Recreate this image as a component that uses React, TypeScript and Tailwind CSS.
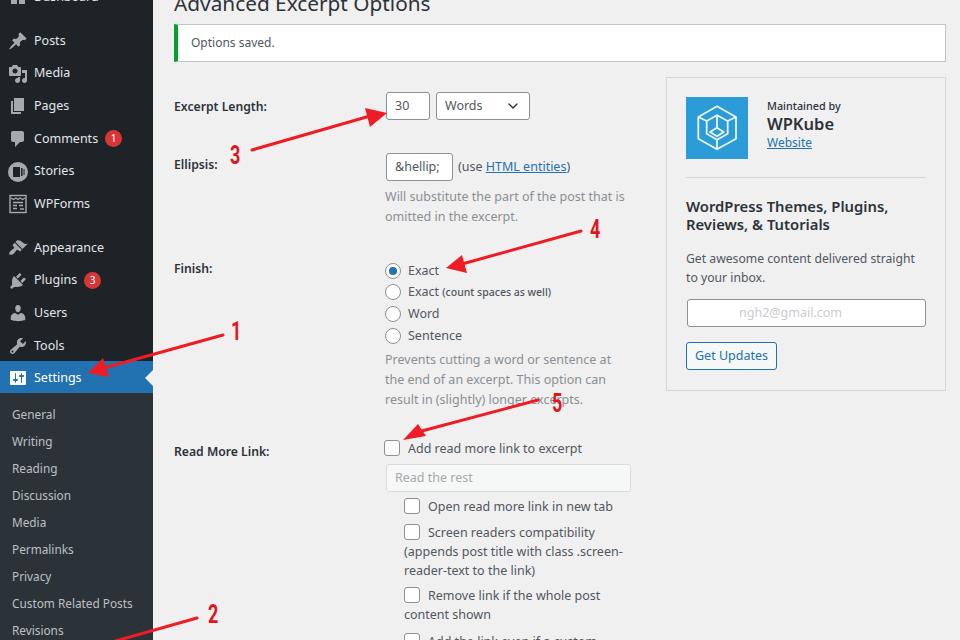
import React from "react";
import { ChevronDown } from "lucide-react";

const FONT = "font-['Noto_Sans','Open_Sans',sans-serif]";

const ICONS: Record<string, string> = {
  post: "M10.44 3.02l1.82-1.82 6.36 6.35-1.83 1.82c-1.05-.68-2.48-.57-3.41.36l-.75.75c-.92.93-1.04 2.35-.35 3.41l-1.83 1.82-2.41-2.41-2.8 2.79c-.42.42-3.38 2.71-3.8 2.29s1.86-3.39 2.28-3.81l2.79-2.79L4.1 9.36l1.83-1.82c1.05.69 2.48.57 3.4-.36l.75-.75c.93-.92 1.05-2.35.36-3.41z",
  media: "M13 11V4c0-.55-.45-1-1-1h-1.67L9 1H5L3.67 3H2c-.55 0-1 .45-1 1v7c0 .55.45 1 1 1h10c.55 0 1-.45 1-1zM7 4.5c1.38 0 2.5 1.12 2.5 2.5S8.38 9.5 7 9.5 4.5 8.38 4.5 7 5.62 4.5 7 4.5zM14 6h5v10.5c0 1.38-1.12 2.5-2.5 2.5S14 17.88 14 16.5s1.12-2.5 2.5-2.5c.17 0 .34.02.5.05V9h-3V6zm-4 8.05V13h2v3.5c0 1.38-1.12 2.5-2.5 2.5S7 17.88 7 16.5 8.12 14 9.5 14c.17 0 .34.02.5.05z",
  page: "M6 15V2h10v13H6zm-1 1h8v2H3V5h2v11z",
  comment: "M5 2h9c1.1 0 2 .9 2 2v7c0 1.1-.9 2-2 2h-2l-5 5v-5H5c-1.1 0-2-.9-2-2V4c0-1.1.9-2 2-2z",
  appearance: "M14.48 11.06L7.41 3.99l1.5-1.5c.5-.56 2.3-.47 3.51.32 1.21.8 1.43 1.28 2.91 2.1 1.18.64 2.45 1.26 4.45.85zm-.71.71L6.7 4.7 4.93 6.47c-.39.39-.39 1.02 0 1.41l1.06 1.06c.39.39.39 1.03 0 1.42-.6.6-1.43 1.11-2.21 1.69-.35.26-.7.53-1.01.84C1.43 13.23.78 15.78 1.52 16.5c.73.73 3.29.08 4.64-1.27.31-.31.58-.65.84-1.01.58-.78 1.09-1.61 1.69-2.21.39-.39 1.02-.39 1.41 0l1.06 1.06c.39.39 1.02.39 1.41 0z",
  plugin: "M13.11 4.36L9.87 7.6 8 5.73l3.24-3.24c.35-.34 1.05-.2 1.56.32.52.51.66 1.21.31 1.55zm-8 1.77l.91-1.12 9.01 9.01-1.19.84c-.71.71-2.63 1.16-3.82 1.16H6.14L4.9 17.26c-.59.59-1.54.59-2.12 0-.59-.58-.59-1.53 0-2.12l1.24-1.24v-3.88c0-1.13.4-3.19 1.09-3.89zm7.26 3.97l3.24-3.24c.34-.35 1.04-.21 1.55.31.52.51.66 1.21.31 1.55l-3.24 3.25z",
  users: "M10 9.25c-2.27 0-2.73-3.44-2.73-3.44C7 4.02 7.82 2 9.97 2c2.16 0 2.98 2.02 2.71 3.81 0 0-.41 3.44-2.68 3.44zm0 2.57L12.72 10c2.39 0 4.52 2.33 4.52 4.53v2.49s-3.65 1.13-7.24 1.13c-3.65 0-7.24-1.13-7.24-1.13v-2.49c0-2.25 1.94-4.48 4.47-4.48z",
  tools: "M16.68 9.77c-1.34 1.34-3.3 1.67-4.95.99l-5.41 6.52c-.99.99-2.59.99-3.58 0s-.99-2.59 0-3.57l6.52-5.42c-.68-1.65-.35-3.61.99-4.95 1.28-1.28 3.12-1.62 4.72-1.06l-2.89 2.89 2.82 2.82 2.86-2.87c.53 1.58.18 3.39-1.08 4.65zM3.81 16.21c.4.39 1.04.39 1.43 0 .4-.4.4-1.04 0-1.43-.39-.4-1.03-.4-1.43 0-.39.39-.39 1.03 0 1.43z",
  settings: "M18 16V4c0-.55-.45-1-1-1H3c-.55 0-1 .45-1 1v12c0 .55.45 1 1 1h14c.55 0 1-.45 1-1zM8 11h1c.55 0 1 .45 1 1s-.45 1-1 1H8v1.5c0 .28-.22.5-.5.5s-.5-.22-.5-.5V13H6c-.55 0-1-.45-1-1s.45-1 1-1h1V5.5c0-.28.22-.5.5-.5s.5.22.5.5V11zm5-2h-1c-.55 0-1-.45-1-1s.45-1 1-1h1V5.5c0-.28.22-.5.5-.5s.5.22.5.5V7h1c.55 0 1 .45 1 1s-.45 1-1 1h-1v5.5c0 .28-.22.5-.5.5s-.5-.22-.5-.5V9z",
  dashboard: "M3 3h14v5H3zM3 10h6v7H3zM11 10h6v7h-6z",
};

const MenuIcon = ({ name }: { name: string }) => {
  if (name === "stories") {
    return (
      <svg viewBox="0 0 20 20" className="w-5 h-5 fill-[#a7aaad]">
        <path d="M10 0a10 10 0 1 0 0 20a10 10 0 0 0 0-20zM5 5h7v10H5zM13 6h1.5v8H13zM15.5 7H16.5v6h-1z" fillRule="evenodd" />
      </svg>
    );
  }
  if (name === "wpforms") {
    return (
      <svg viewBox="0 0 20 20" className="w-5 h-5 fill-none stroke-[#a7aaad]">
        <rect x="2" y="1.500" width="16" height="17" strokeWidth="1.400" />
        <path d="M3 4l2.500 1.500L8 4l2 1.500L12 4l2.500 1.500L17 4M5 8.500h10M5 11.500h4M11 11.500h4M5 14.500h4M12 15h4" strokeWidth="1.300" />
      </svg>
    );
  }
  return (
    <svg viewBox="0 0 20 20" className={name === "settings" ? "w-5 h-5 fill-white" : "w-5 h-5 fill-[#a7aaad]"}>
      <path d={ICONS[name]} />
    </svg>
  );
};

const MenuItem = ({ icon, label, badge, active }: { icon: string; label: string; badge?: string; active?: boolean }) => (
  <div className={active ? "relative flex items-center h-[32px] -mt-[1.500px] pt-[2px] bg-[#2271b1] text-white" : "flex items-center h-[32.7px] text-[#e4e6e7]"}>
    <div className="w-[34px] flex justify-center pl-[1px]">
      <MenuIcon name={icon} />
    </div>
    <span className="text-[12.500px] leading-none">{label}</span>
    {badge && (
      <span className="ml-[7px] w-[17px] h-[17px] rounded-full bg-[#d63638] text-white text-[10px] flex items-center justify-center">
        {badge}
      </span>
    )}
    {active && (
      <span className="absolute right-0 top-[9px] border-y-[8px] border-r-[8px] border-y-transparent border-r-[#f0f0f1]" />
    )}
  </div>
);

const SIDE_TOP = [
  { icon: "post", label: "Posts" },
  { icon: "media", label: "Media" },
  { icon: "page", label: "Pages" },
  { icon: "comment", label: "Comments", badge: "1" },
  { icon: "stories", label: "Stories" },
  { icon: "wpforms", label: "WPForms" },
];

const SIDE_BOTTOM = [
  { icon: "appearance", label: "Appearance" },
  { icon: "plugin", label: "Plugins", badge: "3" },
  { icon: "users", label: "Users" },
  { icon: "tools", label: "Tools" },
];

const SUBMENU = ["General", "Writing", "Reading", "Discussion", "Media", "Permalinks", "Privacy", "Custom Related Posts", "Revisions"];

const Sidebar = () => (
  <aside className="w-[153px] shrink-0 h-[640px] overflow-hidden bg-[#1d2327]">
    <div className="mt-[-19.200px]">
      <MenuItem icon="dashboard" label="Dashboard" />
      <div className="h-[11px]" />
      {SIDE_TOP.map((m) => (
        <MenuItem key={m.label} {...m} />
      ))}
      <div className="h-[11px]" />
      {SIDE_BOTTOM.map((m) => (
        <MenuItem key={m.label} {...m} />
      ))}
      <MenuItem icon="settings" label="Settings" active />
      <div className="bg-[#2c3338] pt-[8.500px] pb-[20px]">
        {SUBMENU.map((s) => (
          <div key={s} className="h-[27.050px] pl-[12px] flex items-center text-[11.800px] text-[#bcc0c4]">
            {s}
          </div>
        ))}
      </div>
    </div>
  </aside>
);

const Radio = ({ checked, className, children }: { checked?: boolean; className: string; children: React.ReactNode }) => (
  <div className={`flex items-center ${className}`}>
    <span className="w-[16px] h-[16px] rounded-full border border-[#8c8f94] bg-white flex items-center justify-center mr-[7px]">
      {checked && <span className="w-[8px] h-[8px] rounded-full bg-[#2271b1]" />}
    </span>
    <span>{children}</span>
  </div>
);

const Check = ({ className }: { className: string }) => (
  <span className={`inline-block align-[-3px] w-[16px] h-[16px] rounded-[3px] border border-[#8c8f94] bg-white ${className}`} />
);

const Field = ({ label, className, labelClass, children }: { label: string; className: string; labelClass?: string; children: React.ReactNode }) => (
  <div className={`flex ${className}`}>
    <div className={`w-[211px] shrink-0 text-[12.200px] font-semibold text-[#2c3338] ${labelClass ?? ""}`}>{label}</div>
    <div className="w-[250px]">{children}</div>
  </div>
);

const Options = () => (
  <div className="w-[472px] shrink-0 text-[12.500px] leading-[20px] text-[#50575e]">
    <Field label="Excerpt Length:" className="mt-[36px] leading-[20px]" labelClass="mt-[-1px]">
      <div className="flex gap-[6px] -mt-[6px] ml-[1px]">
        <div className="w-[44px] h-[28px] rounded-[3px] border border-[#8c8f94] bg-white px-[8px] flex items-center">30</div>
        <div className="w-[94px] h-[28px] rounded-[3px] border border-[#8c8f94] bg-white px-[8px] flex items-center justify-between">
          Words
          <ChevronDown size={16} strokeWidth={2} className="text-[#2c3338]" />
        </div>
      </div>
    </Field>
    <Field label="Ellipsis:" className="mt-[33px]" labelClass="mt-[2px]">
      <div className="flex items-center gap-[5px] ml-[1px]">
        <div className="w-[67px] h-[28px] rounded-[3px] border border-[#8c8f94] bg-white px-[8px] flex items-center">&amp;hellip;</div>
        <span>
          (use <span className="text-[#2271b1] underline">HTML entities</span>)
        </span>
      </div>
      <p className="mt-[6px] text-[#8a8f94]">Will substitute the part of the post that is omitted in the excerpt.</p>
    </Field>
    <Field label="Finish:" className="mt-[34px]" labelClass="mt-[-2px]">
      <div>
        <Radio checked className="h-[20px]">Exact</Radio>
        <Radio className="h-[22px]">
          Exact <span className="text-[10.500px] font-medium">(count spaces as well)</span>
        </Radio>
        <Radio className="h-[22px]">Word</Radio>
        <Radio className="h-[22px]">Sentence</Radio>
      </div>
      <p className="mt-[3px] w-[236px] text-[#8a8f94]">Prevents cutting a word or sentence at the end of an excerpt. This option can result in (slightly) longer excerpts.</p>
    </Field>
    <Field label="Read More Link:" className="mt-[29px]" labelClass="mt-[3px]">
      <div className="leading-[20px]">
        <Check className="mr-[8px] -ml-[1px]" />
        Add read more link to excerpt
      </div>
      <div className="mt-[5px] w-[245px] h-[28px] ml-[1px] rounded-[3px] border border-[#dcdcde] bg-[#f6f7f7] px-[8px] flex items-center text-[#a7aaad]">
        Read the rest
      </div>
      <div className="pl-[19px] mt-[5px] leading-[19px] w-[250px]">
        <div>
          <Check className="mr-[8px]" />
          Open read more link in new tab
        </div>
        <div className="mt-[7px]">
          <Check className="mr-[8px]" />
          Screen readers compatibility (appends post title with class .screen-reader-text to the link)
        </div>
        <div className="mt-[6px]">
          <Check className="mr-[8px]" />
          Remove link if the whole post content shown
        </div>
        <div className="mt-[8px] whitespace-nowrap">
          <Check className="mr-[8px]" />
          Add the link even if a custom
        </div>
      </div>
    </Field>
  </div>
);

const Logo = () => (
  <div className="w-[62px] h-[62px] shrink-0 bg-[#2b9cd8]">
    <svg viewBox="0 0 62 62" className="w-[62px] h-[62px] fill-none stroke-[#e8f5fb]" strokeWidth="1.800" strokeLinejoin="round">
      <path d="M31 9.300L50 20V41.700L31 52.300L12.300 41.700V20Z" />
      <path d="M31 18.300L41.700 24V36.700L31 42.700L20.700 36.700V24Z" />
      <path d="M31 18.300V30.700M12.300 20L20.700 24M50 20L41.700 24M31 52.300V42.700M31 30.700L37.700 35L31 39.300L24 35Z" />
    </svg>
  </div>
);

const Promo = () => (
  <div className="w-[280px] h-[314px] mt-[15px] ml-[20px] border border-[#d3d5d7] px-[19px] pt-[19px] text-[#2c3338]">
    <div className="flex items-center gap-[19px]">
      <Logo />
      <div className="flex flex-col mt-[-7px]">
        <span className="text-[10.800px] leading-[16px] font-medium">Maintained by</span>
        <span className="text-[16.500px] leading-[20px] font-semibold">WPKube</span>
        <span className="text-[12px] leading-[17px] text-[#2271b1] underline">Website</span>
      </div>
    </div>
    <div className="h-px bg-[#d3d5d7] mt-[18px]" />
    <h3 className="mt-[19px] text-[14.800px] leading-[18px] font-semibold">WordPress Themes, Plugins, Reviews, &amp; Tutorials</h3>
    <p className="mt-[16px] text-[12.200px] leading-[19px] text-[#50575e]">Get awesome content delivered straight to your inbox.</p>
    <div className="mt-[12px] ml-[1px] w-[239px] h-[28px] rounded-[3px] border border-[#8c8f94] bg-white pl-[51px] flex items-center text-[12.500px] text-[#c9cccf]">
      ngh2@gmail.com
    </div>
    <div className="mt-[15px] w-[91px] h-[28px] rounded-[3px] border border-[#2271b1] bg-[#f6f7f7] text-[#2271b1] text-[12.500px] flex items-center justify-center">
      Get Updates
    </div>
  </div>
);

const Arrows = () => (
  <svg viewBox="0 0 960 640" className="absolute inset-0 w-[960px] h-[640px] pointer-events-none fill-[#ee1c25] stroke-[#ee1c25]">
    <g strokeWidth="3" strokeLinecap="round">
      <line x1="223" y1="335" x2="104" y2="368" />
      <line x1="197" y1="618" x2="112" y2="642" />
      <line x1="252" y1="150" x2="370" y2="116" />
      <line x1="581" y1="231" x2="462" y2="264" />
      <line x1="538" y1="400" x2="418" y2="432" />
    </g>
    <g stroke="none">
      <polygon points="88,373 103,358 109,377" />
      <polygon points="387,113 365,108 370,127" />
      <polygon points="446,268 462,255 467,273" />
      <polygon points="403,440 418,424 426,436" />
    </g>
  </svg>
);

const Num = ({ className, children }: { className: string; children: React.ReactNode }) => (
  <span className={`absolute font-['Roboto',sans-serif] font-bold text-[25px] leading-none text-[#e0161e] scale-x-[0.72] ${className}`}>
    {children}
  </span>
);

export default function App() {
  return (
    <div className={`relative w-[960px] h-[640px] overflow-hidden flex bg-[#f0f0f1] ${FONT}`}>
      <Sidebar />
      <main className="flex-1 pl-[21px] pr-[15px]">
        <h1 className="text-[20.800px] leading-[29px] mt-[-11px] text-[#2c3338]">Advanced Excerpt Options</h1>
        <div className="mt-[6px] h-[38px] bg-white border border-[#c3c4c7] border-l-4 border-l-[#00a32a] pl-[13px] flex items-center text-[12px] text-[#50575e]">
          Options saved.
        </div>
        <div className="flex">
          <Options />
          <Promo />
        </div>
      </main>
      <Arrows />
      <Num className="left-[229px] top-[319px]">1</Num>
      <Num className="left-[206px] top-[602px]">2</Num>
      <Num className="left-[228px] top-[143px]">3</Num>
      <Num className="left-[588px] top-[217px]">4</Num>
      <Num className="left-[550px] top-[391px]">5</Num>
    </div>
  );
}
